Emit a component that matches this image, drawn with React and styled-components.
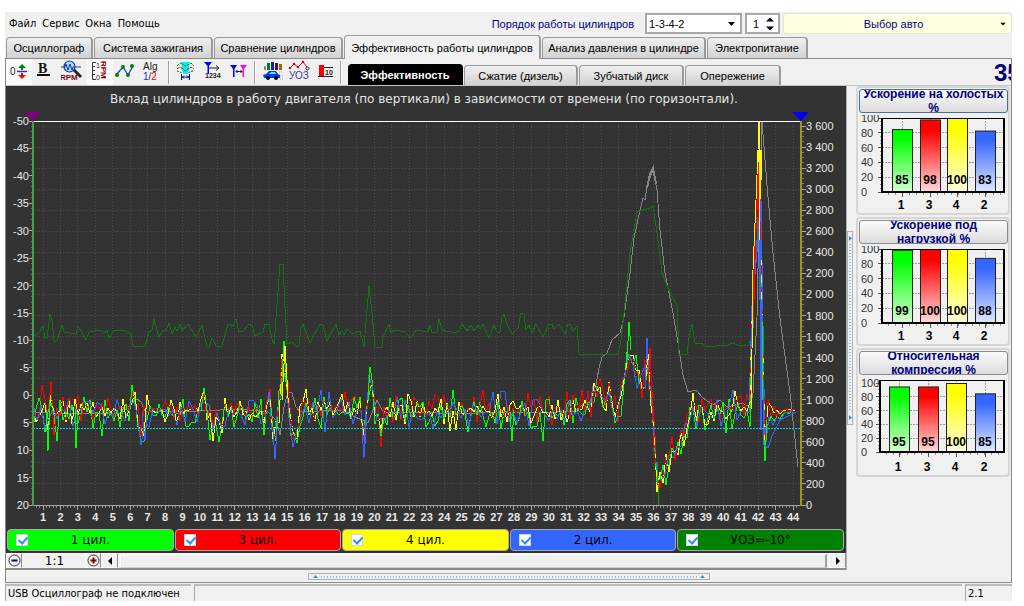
import React from "react";
import styled, { createGlobalStyle, css } from "styled-components";

const UI = `"DejaVu Sans Condensed", "DejaVu Sans", sans-serif`;
const WIDE = `"DejaVu Sans", sans-serif`;
const ARIAL = `"Liberation Sans", sans-serif`;
const COLORS = { green: "#00ff00", red: "#ff0000", yellow: "#ffff00", blue: "#3366ff", dark: "#008000" };

const GlobalStyle = createGlobalStyle`
  * { box-sizing: border-box; }
  body { margin: 0; background: #fff; font: 11px ${UI}; color: #000; }
  button, select, input { font: inherit; color: inherit; margin: 0; padding: 0; }
`;

const Page = styled.div`
  padding: 12px 12px 5px 5px;
`;
const Window = styled.div`
  background: #f0f0f0;
  overflow: hidden;
`;
const MenuBar = styled.header`
  display: flex;
  align-items: center;
  height: 23px;
  gap: 3px;
`;
const Menu = styled.nav`
  display: flex;
  gap: 6px;
  padding-left: 4px;
  flex: 1;
`;
const MenuItem = styled.button`
  border: 0;
  background: none;
  font: 11px ${UI};
`;
const OrderLabel = styled.label`
  font: 11px ${ARIAL};
  color: #000080;
  margin-right: 8px;
`;
const Field = styled.div`
  position: relative;
  height: 21px;
  width: ${(p) => p.$width}px;
  border: ${(p) => (p.$accent ? "1px solid #e4e4d0" : "2px solid #a8a8a8")};
  border-radius: ${(p) => (p.$accent ? 3 : 0)}px;
  background: ${(p) => (p.$accent ? "#ffffe1" : "#fff")};
  font: 11px ${ARIAL};
  color: ${(p) => (p.$accent ? "#000080" : "#000")};
  svg {
    position: absolute;
    right: ${(p) => p.$arrow}px;
    top: 50%;
    transform: translateY(-50%);
    pointer-events: none;
  }
`;
const controlStyle = css`
  appearance: none;
  width: 100%;
  height: 100%;
  border: 0;
  background: transparent;
  outline: 0;
  display: block;
`;
const Select = styled.select`
  ${controlStyle}
  padding-left: ${(p) => (p.$center ? 0 : 2)}px;
  text-align: ${(p) => (p.$center ? "center" : "left")};
  text-align-last: ${(p) => (p.$center ? "center" : "left")};
  padding-right: ${(p) => (p.$center ? 8 : 0)}px;
`;
const Spin = styled.input`
  ${controlStyle}
  appearance: textfield;
  padding-left: 6px;
  &::-webkit-inner-spin-button { appearance: none; }
`;

const Tabs = styled.div`
  display: flex;
  align-items: flex-end;
  gap: ${(p) => p.$gap}px;
  height: 23px;
  padding-left: ${(p) => p.$pad}px;
`;
const Tab = styled.button`
  font: 11px/16px ${ARIAL};
  height: 21px;
  width: ${(p) => p.$width}px;
  white-space: nowrap;
  border: 1px solid #9a9a9a;
  border-bottom: 0;
  border-right-width: 2px;
  border-radius: 4px 4px 0 0;
  background: linear-gradient(#efefef, #d2d2d2);
  ${(p) => p.$active && css`
    height: 24px;
    margin-bottom: -1px;
    z-index: 1;
    background: #f0f0f0;
  `}
`;
const SubTab = styled(Tab)`
  height: 20px;
  ${(p) => p.$selected && css`
    height: 21px;
    font-weight: bold;
    background: #000;
    border-color: #000;
    color: #fff;
  `}
`;
const Panel = styled.main`
  border: 1px solid #8a8a8a;
  padding-bottom: 2px;
`;
const ToolRow = styled.div`
  display: flex;
  align-items: flex-end;
  height: 27px;
  border-bottom: 1px solid #c4c4c4;
`;
const Tools = styled.div`
  display: flex;
  gap: 1px;
  align-self: center;
`;
const Tool = styled.button`
  width: 26px;
  height: 26px;
  border: 0;
  padding: 1px;
  background: ${(p) => (p.$on ? "#fafafa" : "transparent")};
  svg { display: block; }
`;
const Sep = styled.div`
  width: 2px;
  height: 23px;
  align-self: center;
  margin: 0 3px 0 1px;
  border-left: 1px solid #a0a0a0;
  border-right: 1px solid #fff;
`;
const Readout = styled.output`
  margin-left: auto;
  width: 17px;
  overflow: hidden;
  font: bold 24px/25px ${ARIAL};
  color: #000080;
`;

const Body = styled.div`
  display: flex;
`;
const ChartColumn = styled.section`
  flex: 1;
  min-width: 0;
  border-right: 1px solid #b0b0b0;
`;
const ChartArea = styled.div`
  background: #333;
  padding-bottom: 2px;
`;
const ChartTitle = styled.h1`
  margin: 0;
  height: 22px;
  padding: 4px 4px 0 0;
  font: 12px/18px ${WIDE};
  color: #e4e4e4;
  text-align: center;
`;
const Plot = styled.svg`
  display: block;
  width: 100%;
  height: auto;
`;
const Legend = styled.div`
  display: flex;
  gap: 1px;
  padding: 0 2px 0 1px;
`;
const LegendItem = styled.label`
  flex: 1;
  display: flex;
  align-items: center;
  height: 22px;
  padding: 0 20px 0 8px;
  border: 1px solid #a9a9a9;
  border-radius: 4px;
  background: ${(p) => p.$color};
  font: 12px ${WIDE};
`;
const LegendText = styled.span`
  flex: 1;
  text-align: center;
`;
const Check = styled.input`
  appearance: none;
  flex: none;
  width: 12px;
  height: 12px;
  background: #fff;
  border: 1px solid #c8d8e8;
  position: relative;
  &:checked::after {
    content: "";
    position: absolute;
    left: 3px;
    top: 0;
    width: 4px;
    height: 7px;
    border: solid #2d8ff0;
    border-width: 0 2px 2px 0;
    transform: rotate(42deg);
  }
`;
const ZoomRow = styled.div`
  display: flex;
  height: 17px;
  border-bottom: 2px solid #8c8c8c;
`;
const ZoomButton = styled.button`
  width: ${(p) => p.$width}px;
  border: 1px solid #fff;
  border-right: 1px solid #909090;
  background: #f0f0f0;
  display: flex;
  align-items: center;
  justify-content: center;
`;
const ZoomValue = styled.output`
  width: 63px;
  padding-left: 2px;
  text-align: center;
  font: 12px/17px ${WIDE};
`;
const ScrollTrack = styled.div`
  flex: 1;
  margin: 1px 2px 0;
  border: 1px solid #fff;
  border-right: 2px solid #a0a0a0;
  border-bottom-color: #d0d0d0;
`;
const VSplit = styled.div`
  width: 6px;
  display: flex;
  align-items: center;
  justify-content: center;
`;
const SplitGrip = styled.div`
  display: flex;
  flex-direction: ${(p) => (p.$vertical ? "column" : "row")};
  align-items: center;
  justify-content: space-between;
  border: 1px solid #b0b0b0;
  padding: ${(p) => (p.$vertical ? "4px 0" : "0 4px")};
  gap: 3px;
  width: ${(p) => (p.$vertical ? "6px" : "40%")};
  height: ${(p) => (p.$vertical ? "40%" : "7px")};
`;
const GripDots = styled.div`
  flex: 1;
  align-self: center;
  ${(p) => (p.$vertical
    ? css`width: 2px; background: repeating-linear-gradient(#8cc0f0 0 1px, transparent 1px 3px);`
    : css`height: 2px; background: repeating-linear-gradient(90deg, #8cc0f0 0 1px, transparent 1px 3px);`)}
`;
const HSplit = styled.div`
  display: flex;
  justify-content: center;
  padding-top: 3px;
`;
const Side = styled.aside`
  width: 158px;
  padding: 0 1px 0 3px;
  display: flex;
  flex-direction: column;
  gap: 2px;
`;
const Group = styled.section`
  border: 2px solid #d6d6d6;
  border-radius: 4px;
  padding-top: 1px;
  height: 129px;
`;
const GroupButton = styled.button`
  display: block;
  width: 149px;
  height: 24px;
  margin: 0 0 2px 1px;
  overflow: hidden;
  border: 1px solid ${(p) => (p.$focus ? "#4a7096" : "#8c8c8c")};
  border-radius: 3px;
  background: linear-gradient(#fafafa, #dcdcdc);
`;
const GroupText = styled.span`
  display: block;
  height: 28px;
  margin: -3px 0;
  padding: 0 2px;
  font: bold 12px/14px ${ARIAL};
  color: #000080;
`;
const BarSvg = styled.svg`
  display: block;
`;
const StatusBar = styled.footer`
  display: flex;
  gap: 3px;
  padding-top: 1px;
`;
const StatusCell = styled.div`
  height: 17px;
  border-top: 2px solid #bcbcbc;
  border-left: 1px solid #a8a8a8;
  padding-left: 2px;
  font: 11px/16px ${UI};
  width: ${(p) => (p.$width ? p.$width + "px" : "auto")};
  flex: ${(p) => (p.$width ? "none" : 1)};
`;

/* ---------- chart data, in plot units ---------- */
const LEFT = 33, RIGHT = 801, TOP = 121, BOTTOM = 505;

const ADVANCE =
  "33,336 38,334 43,326 45,338 47,338 50,314 52,320 54,341 57,341 62,325 64,332 76,334 78,326 86,340 89,332 99,330 105,333 107,330 109,338 114,330 123,330 131,334 133,346 145,346 149,332 152,330 154,319 159,337 163,330 166,331 169,323 172,334 175,327 177,331 180,324 182,331 188,324 196,337 199,331 202,325 207,347 209,347 212,338 216,346 222,346 228,324 233,326 236,319 239,332 243,331 249,324 252,326 255,336 263,332 265,324 269,324 272,339 274,344 277,305 280,264 283,264 285,307 287,344 292,342 297,347 299,345 301,328 303,324 310,343 320,324 323,325 327,341 336,324 339,335 342,331 344,335 347,329 352,334 360,331 364,347 367,310 369,286 372,313 375,347 382,347 383,337 389,324 391,333 395,330 405,332 411,338 416,330 428,332 430,325 432,332 437,332 439,319 442,330 455,333 459,331 462,324 467,331 471,325 474,331 478,325 480,329 483,324 489,338 494,325 497,332 500,332 502,317 504,314 507,324 512,334 518,328 521,313 524,314 526,330 529,325 532,333 536,324 543,337 549,324 552,324 554,329 559,324 565,334 568,324 570,324 573,331 577,326 579,354 618,354 621,340 624,313 630,253 637,212 650,208 653,206 657,233 662,273 670,293 677,305 678,330 679,354 687,354 689,337 692,324 695,343 703,344 706,347 728,345 732,343 740,346 748,345 751,338";

const RPM =
  "33,412 60,414 90,413 122,413 130,405 137,399 141,402 145,411 180,412 240,409 268,412 276,420 280,435 284,407 288,392 292,393 296,407 300,412 340,410 362,420 368,423 377,400 382,410 386,413 420,412 460,414 500,412 540,413 575,411 585,403 590,405 596,385 599,368 602,357 607,353 612,340 620,333 624,317 630,273 634,238 640,210 643,198 645,200 647,187 650,178 653,170 657,190 660,230 665,273 673,313 677,337 683,375 688,392 696,390 703,398 713,405 720,400 727,407 742,403 750,407 753,393 757,317 759,220 762,122 768,197 773,253 780,318 785,356 790,393 794,430 798,467";

const ENVELOPE = [
  [33, 411], [40, 410], [43, 398], [47, 430], [50, 394], [55, 418], [60, 410], [129, 411], [133, 388], [137, 415], [142, 434], [147, 412],
  [199, 410], [203, 390], [207, 420], [220, 426], [226, 412], [266, 412], [270, 390], [272, 430], [274, 448], [278, 415], [281, 380], [284, 352], [287, 385],
  [290, 425], [295, 441], [300, 410], [357, 409], [360, 394], [362, 425], [364, 448], [367, 400], [370, 376], [373, 388], [377, 420], [380, 432],
  [385, 412], [580, 410], [590, 408], [596, 378], [601, 394], [606, 408], [609, 390], [614, 414], [618, 414], [623, 384], [629, 352], [634, 362],
  [640, 380], [643, 392], [647, 360], [650, 376], [653, 418], [656, 472], [659, 484], [664, 472], [670, 453], [676, 450], [683, 442], [688, 426],
  [692, 404], [697, 413], [745, 410], [750, 408], [752, 340], [753, 270], [756, 210], [759, 150], [761, 200], [763, 420], [765, 440], [768, 412],
  [772, 418], [780, 414], [792, 410], [796, 411],
];

const SERIES = [
  { color: COLORS.yellow, seed: 75, step: 3, amp: 13, shift: 0, tail: -4, peak: 122 },
  { color: COLORS.red, seed: 41, step: 3, amp: 15, shift: -3, tail: -2, peak: 165 },
  { color: COLORS.green, seed: 97, step: 3, amp: 17, shift: 3, tail: 2, peak: 200 },
  { color: COLORS.blue, seed: 13, step: 4, amp: 14, shift: 2, tail: 6, peak: 172 },
  { color: COLORS.yellow, seed: 75, step: 3, amp: 13, shift: 0, tail: -4, peak: 122, dash: "7 9" },
  { color: COLORS.red, seed: 41, step: 3, amp: 15, shift: -3, tail: -2, peak: 165, dash: "5 17" },
];

function envelope(x) {
  for (let i = 1; i < ENVELOPE.length; i++) {
    const [x1, y1] = ENVELOPE[i];
    const [x0, y0] = ENVELOPE[i - 1];
    if (x <= x1) return y0 + ((y1 - y0) * (x - x0)) / (x1 - x0);
  }
  return 412;
}

function randomSource(seed) {
  let a = seed * 2654435761;
  return () => {
    a = (a + 0x6d2b79f5) | 0;
    let t = Math.imul(a ^ (a >>> 15), 1 | a);
    t = (t + Math.imul(t ^ (t >>> 7), 61 | t)) ^ t;
    return ((t ^ (t >>> 14)) >>> 0) / 4294967296;
  };
}

function trace({ seed, step, amp, shift, tail, peak }) {
  const rand = randomSource(seed);
  const points = [];
  let side = 1;
  for (let x = LEFT; x <= 796; x += step) {
    const calm = x > 766 ? Math.max(0, (796 - x) / 45) : 1;
    side = rand() > 0.25 ? -side : side;
    const size = Math.pow(rand(), 1.4) * amp * (rand() > 0.86 ? 1.7 : 1);
    let y = envelope(x) + shift * calm + side * size * calm;
    if (x > 766) y += tail * 2 * calm;
    if (x > 750 && x < 763) y = Math.max(envelope(x), peak);
    points.push(`${x},${Math.round(y)}`);
  }
  return points.join(" ");
}

const range = (n) => Array.from({ length: n }, (_, i) => i);
const leftY = (v) => TOP + ((v + 50) * 384) / 70;
const rightY = (v) => BOTTOM - (v * 379) / 3600;
const tickX = (n) => 43 + ((n - 1) * 750) / 43;

function MainChart() {
  return (
    <Plot viewBox="6 108 840 421" role="img" aria-label="Вклад цилиндров">
      <g stroke="#4d4d4d" strokeDasharray="1 2" shapeRendering="crispEdges">
        {range(44).map((i) => <line key={i} x1={tickX(i + 1)} x2={tickX(i + 1)} y1={TOP} y2={BOTTOM} />)}
        {range(18).map((i) => <line key={i} x1={LEFT} x2={RIGHT} y1={rightY((i + 1) * 200)} y2={rightY((i + 1) * 200)} />)}
      </g>
      <g stroke="#a8a8a8" shapeRendering="crispEdges">
        {range(15).map((i) => <line key={i} x1="29" x2="33" y1={leftY(i * 5 - 50)} y2={leftY(i * 5 - 50)} />)}
        {range(70).map((i) => <line key={i} x1="31" x2="33" y1={leftY(i - 50)} y2={leftY(i - 50)} opacity=".5" />)}
        {range(19).map((i) => <line key={i} x1="801" x2="806" y1={rightY(i * 200)} y2={rightY(i * 200)} />)}
        {range(73).map((i) => <line key={i} x1="801" x2="804" y1={rightY(i * 50)} y2={rightY(i * 50)} opacity=".6" />)}
        {range(44).map((i) => <line key={i} x1={tickX(i + 1)} x2={tickX(i + 1)} y1="505" y2="510" />)}
        {range(219).map((i) => <line key={i} x1={tickX(0.6 + i * 0.2)} x2={tickX(0.6 + i * 0.2)} y1="505" y2="508" opacity=".7" />)}
        <line x1={LEFT} x2={RIGHT} y1="505.5" y2="505.5" />
      </g>
      <g fontFamily="Liberation Sans, sans-serif" fontSize="11" fill="#e8e8e8">
        {range(15).map((i) => <text key={i} x="29" y={leftY(i * 5 - 50) + 4} textAnchor="end">{i * 5 - 50}</text>)}
        {range(19).map((i) => (
          <text key={i} x="806" y={rightY(i * 200) + 4}>
            {i >= 5 ? `${Math.floor(i / 5)} ${String((i * 200) % 1000).padStart(3, "0")}` : i * 200}
          </text>
        ))}
      </g>
      <g fontFamily="Liberation Sans, sans-serif" fontSize="11" fontWeight="bold" fill="#e8e8e8" textAnchor="middle">
        {range(44).map((i) => <text key={i} x={tickX(i + 1)} y="521">{i + 1}</text>)}
      </g>
      <g fill="none" shapeRendering="crispEdges">
        <polyline points={RPM} stroke="#868686" />
        <polyline points="647,188 650,174 653,168 656,184" stroke="#868686" strokeWidth="2" />
        {SERIES.map((s, i) => <polyline key={i} points={trace(s)} stroke={s.color} strokeDasharray={s.dash} />)}
        <polyline points="33,411 33,411" stroke={COLORS.green} />
        <polyline points="281,396 284,341 287,384" stroke={COLORS.green} />
        <polyline points="282,400 285,346 288,396" stroke={COLORS.yellow} />
        <polyline points="142,412 145,440 147,412" stroke={COLORS.blue} />
        <polyline points="273,430 275,459 277,430" stroke={COLORS.blue} />
        <polyline points="362,430 364,458 366,410" stroke={COLORS.blue} />
        <polyline points="46,410 48,451 50,400" stroke={COLORS.green} />
        <polyline points="75,408 76,448 78,412" stroke={COLORS.green} />
        <polyline points="368,400 370,367 373,386" stroke={COLORS.green} />
        <polyline points="510,412 512,441 514,410" stroke={COLORS.green} />
        <polyline points="627,360 629,322 631,350" stroke={COLORS.green} />
        <polyline points="645,390 647,338 649,380" stroke={COLORS.blue} />
        <polyline points="648,392 650,348 652,392 656,450" stroke={COLORS.red} />
        <polyline points="752,345 754,280 758,235 760,162 761,430" stroke={COLORS.blue} strokeWidth="2" />
        <polyline points="753,320 755,240 757,200 758,162 760,240" stroke={COLORS.red} strokeWidth="2" />
        <polyline points="751,410 752,350 753,270 756,200 758,150 759,122 760,240" stroke={COLORS.yellow} />
        <polyline points="760,200 761,150 762,180" stroke={COLORS.yellow} />
        <polyline points="762,320 763,400 764,440 765,461 767,420" stroke={COLORS.green} />
        <polyline points="763,380 764,445 768,448 772,436 780,420 796,412" stroke={COLORS.blue} />
        <polyline points="657,462 659,505" stroke="#00b000" />
        <polyline points={ADVANCE} stroke="#137413" />
        <line x1={LEFT} x2={RIGHT} y1="428.5" y2="428.5" stroke="#00d8e0" strokeDasharray="2 1" />
        <line x1={LEFT} x2={RIGHT} y1="121.5" y2="121.5" stroke="#fff" />
      </g>
      <rect x="32" y="121" width="2" height="385" fill="#4aa04a" />
      <rect x="800" y="121" width="2" height="385" fill="#98981c" />
      <path d="M24 112h17l-8 9z" fill="#800080" />
      <path d="M792 112h17l-8 9z" fill="#00f" />
    </Plot>
  );
}

function BarChart({ id, values, left, slots, hundred, bottom }) {
  const top = 3;
  const fills = [COLORS.green, COLORS.red, COLORS.yellow, COLORS.blue];
  const pale = ["#d4ffd4", "#ffd8d8", "#ffffdc", "#e0e8ff"];
  const names = ["1", "3", "4", "2"];
  const y = (v) => bottom - ((bottom - hundred) * v) / 100;
  return (
    <BarSvg width="150" height="98" viewBox="0 0 150 98" role="img">
      <defs>
        {fills.map((c, i) => (
          <linearGradient key={c} id={`${id}${i}`} x1="0" y1="0" x2="0" y2="1">
            <stop offset="0.15" stopColor={c} />
            <stop offset="1" stopColor={pale[i]} />
          </linearGradient>
        ))}
      </defs>
      <g stroke="#a0a0a0" strokeDasharray="2 1" shapeRendering="crispEdges">
        {[20, 40, 60, 80].map((v) => <line key={v} x1={left} x2="146" y1={y(v)} y2={y(v)} />)}
        {slots.map((s) => <line key={s} x1={s + 10} x2={s + 10} y1={top} y2={bottom} />)}
      </g>
      <g stroke="#555" shapeRendering="crispEdges">
        {range(6).map((i) => <line key={i} x1={left - 4} x2={left} y1={y(i * 20)} y2={y(i * 20)} />)}
        {range(21).map((i) => <line key={i} x1={left - 2} x2={left} y1={y(i * 5)} y2={y(i * 5)} opacity=".6" />)}
        {range(17).map((i) => <line key={i} x1={left + 6 + i * 7} x2={left + 6 + i * 7} y1={bottom} y2={bottom + 3} opacity=".6" />)}
        {slots.map((s) => <line key={s} x1={s + 10} x2={s + 10} y1={bottom} y2={bottom + 5} />)}
      </g>
      {values.map((v, i) => (
        <rect key={i} x={slots[i] + 0.5} y={y(v) + 0.5} width="20" height={bottom - y(v) - 1} fill={`url(#${id}${i})`} stroke="#222" />
      ))}
      <path d={`M${left} ${top + 0.5}H146V${bottom}H${left}z`} fill="none" stroke="#000" strokeWidth="1.5" shapeRendering="crispEdges" />
      <path d={`M${left} ${bottom}H147`} stroke="#000" strokeWidth="2" shapeRendering="crispEdges" />
      <g fontFamily="Liberation Sans, sans-serif" fontSize="11" fill="#333">
        {range(6).map((i) => <text key={i} x="3" y={y(i * 20) + 4}>{i * 20}</text>)}
      </g>
      <g fontFamily="Liberation Sans, sans-serif" fontSize="12" fontWeight="bold" textAnchor="middle">
        {values.map((v, i) => <text key={i} x={slots[i] + 10} y="69">{v}</text>)}
        {names.map((n, i) => <text key={n} x={slots[i] + 9} y="94">{n}</text>)}
      </g>
    </BarSvg>
  );
}

/* ---------- toolbar drawings ---------- */
const Glyph = ({ children }) => (
  <svg width="24" height="24" viewBox="0 0 24 24" fill="none" fontFamily="Liberation Sans, sans-serif">{children}</svg>
);
const glyphs = {
  zero: (
    <Glyph>
      <text x="3" y="15" fontSize="10" fill="#222">0</text>
      <path d="M10 11.5h10" stroke="#2030c0" strokeWidth="1.5" />
      <path d="M15 10V7" stroke="#008000" strokeWidth="2" /><path d="M11 8l4-4 4 4z" fill="#008000" />
      <path d="M15 13v3" stroke="#f00" strokeWidth="2" /><path d="M11 15l4 4 4-4z" fill="#f00" />
    </Glyph>
  ),
  bold: (
    <Glyph>
      <text x="4" y="13" fontSize="14" fontWeight="bold" fontFamily="Liberation Serif, serif" fill="#111">B</text>
      <path d="M3 15h13" stroke="#111" strokeWidth="2" />
    </Glyph>
  ),
  loupe: (
    <Glyph>
      <path d="M12 9l8 8" stroke="#222" strokeWidth="3" />
      <circle cx="8.5" cy="6.500" r="5.500" fill="#a8d8f8" stroke="#203878" strokeWidth="1.200" />
      <path d="M0 7h4l1-3 2 6 2-6 2 6 1-3h8" stroke="#1838b0" />
      <text x="-1" y="20" fontSize="8" fill="#800000" fontWeight="bold">RPM</text>
    </Glyph>
  ),
  scale: (
    <Glyph>
      <path d="M8 2.500H4.500v17H8M4 6.500h3M4 10.500h3M4 14.500h3" stroke="#333" />
      <text x="8" y="8" fontSize="7" fill="#222">1</text>
      <text x="8" y="20" fontSize="7" fill="#222">0</text>
      <text transform="translate(13 1) rotate(90)" fontSize="8" fontWeight="bold" fill="#800000">RPM</text>
    </Glyph>
  ),
  line: (
    <Glyph>
      <path d="M1 15l7-8 5 8 5-9" stroke="#2030e0" strokeWidth="1.300" />
      {[[2, 15], [8, 7], [13, 15], [17, 6]].map(([x, y]) => <circle key={x} cx={x} cy={y} r="2" fill="#008000" />)}
    </Glyph>
  ),
  alg: (
    <Glyph>
      <text x="1" y="10" fontSize="10" fill="#222">Alg</text>
      <text x="1" y="20" fontSize="10" fill="#22f">1<tspan fill="#333">/</tspan><tspan fill="#f00">2</tspan></text>
    </Glyph>
  ),
  filter: (
    <Glyph>
      <path d="M7 2h9l-1 4 1 3-2 3v2H9v-2L7 9l1-3z" fill="#00f0f8" />
      <path d="M3 6l3-3 2 1 3 2 3-1 3-2 3 3" stroke="#008000" strokeDasharray="3 1" />
      <path d="M3 9l3-2 2 1 3 3 3-2 3-2 3 2" stroke="#f00" strokeDasharray="3 1" />
      <path d="M3 11l3 1 2 1M19 11l-3 1-2 1" stroke="#008000" strokeDasharray="2 1" />
      <path d="M7.500 14v6M15.500 14v6M8 17h7M10 15.500L8.500 17l1.500 1.500M13 15.500l1.500 1.500-1.500 1.500" stroke="#00a" />
    </Glyph>
  ),
  count: (
    <Glyph>
      <path d="M3 2h8L8 6v8H6.500V6z" fill="#00f" />
      <path d="M8 8h9M15 5.500L18 8l-3 2.500" stroke="#222" />
      <text x="4" y="18" fontSize="7" fontWeight="bold" fill="#222">1234</text>
    </Glyph>
  ),
  span: (
    <Glyph>
      <path d="M2 5h7L6.500 9v8H5V9z" fill="#00f" />
      <path d="M12 5h7l-3 4v8h-1.500V9z" fill="#f0f" />
      <path d="M8 11.500h6M9.500 10L8 11.500 9.500 13M12.500 10l1.500 1.500-1.500 1.500" stroke="#222" />
    </Glyph>
  ),
  car: (
    <Glyph>
      <path d="M4 6h2v4H4z" fill="#888" /><path d="M7 3h3v7H7z" fill="#008000" /><path d="M11 2h3v8h-3z" fill="#1020c0" />
      <path d="M15 3h3v7h-3z" fill="#780040" /><path d="M19 4h3v6h-3z" fill="#807800" />
      <path d="M3 15l3-1 3-3h7l2 3 2 1v3H4z" fill="#0040e0" /><path d="M9 14l2-2h4l1 2z" fill="#58e8ff" />
      <circle cx="8" cy="18" r="2" fill="#003" /><circle cx="16" cy="18" r="2" fill="#003" />
      <path d="M19 12h4M20 16h3M20 19h3" stroke="#aaa" strokeDasharray="1 1" />
    </Glyph>
  ),
  angle: (
    <Glyph>
      <text x="2" y="19" fontSize="10" fill="#3838a0">УОЗ</text>
      <path d="M3 8l4-4 4 3 5-5 4 5" stroke="#f00" />
      {[[3, 8], [7, 4], [11, 7], [16, 2]].map(([x, y]) => <circle key={x} cx={x} cy={y} r="1.300" fill="#d00020" />)}
      <circle cx="20.500" cy="8.500" r="1.500" stroke="#222" />
    </Glyph>
  ),
  ten: (
    <Glyph>
      <path d="M5 5h5v11H5z" fill="#f00" /><path d="M10 7.500h9M4 16.500h15" stroke="#222" />
      <text x="11" y="15" fontSize="7" fontWeight="bold" fill="#222">10</text>
    </Glyph>
  ),
};

const TOOL_GROUPS = [
  [["zero", "Ноль", true], ["bold", "Толщина линий"], ["loupe", "Лупа"], ["scale", "Шкала", true], ["line", "Линии"], ["alg", "Алгоритм"]],
  [["filter", "Фильтр"], ["count", "Счёт"], ["span", "Интервал"]],
  [["car", "Авто"], ["angle", "УОЗ"], ["ten", "Десять"]],
];
const TABS = [["Осциллограф", 87], ["Система зажигания", 119], ["Сравнение цилиндров", 129], ["Эффективность работы цилиндров", 197], ["Анализ давления в цилиндре", 164], ["Электропитание", 101]];
const SUBTABS = [["Эффективность", 115], ["Сжатие (дизель)", 114], ["Зубчатый диск", 105], ["Опережение", 96]];
const LEGEND = [["1 цил.", COLORS.green], ["3 цил.", COLORS.red], ["4 цил.", COLORS.yellow], ["2 цил.", COLORS.blue], ["УОЗ=-10°", COLORS.dark]];
const GROUPS = [
  { id: "idle", title: "Ускорение на холостых %", values: [85, 98, 100, 83], left: 24, slots: [34, 62, 89, 117], hundred: 3, bottom: 77, focus: true },
  { id: "load", title: "Ускорение под нагрузкой %", values: [99, 100, 100, 88], left: 24, slots: [34, 62, 89, 117], hundred: 3, bottom: 77 },
  { id: "comp", title: "Относительная компрессия %", values: [95, 95, 100, 85], left: 22, slots: [31, 60, 88, 117], hundred: 6, bottom: 75 },
];

const Triangle = ({ d, w = 7, h = 4, fill = "#000" }) => (
  <svg width={w} height={h} viewBox={`0 0 ${w} ${h}`}><path d={d} fill={fill} /></svg>
);

export default function App() {
  return (
    <Page>
      <GlobalStyle />
      <Window>
        <MenuBar>
          <Menu>{["Файл", "Сервис", "Окна", "Помощь"].map((m) => <MenuItem key={m}>{m}</MenuItem>)}</Menu>
          <OrderLabel htmlFor="order">Порядок работы цилиндров</OrderLabel>
          <Field $width={97} $arrow={5}>
            <Select id="order" defaultValue="1-3-4-2"><option>1-3-4-2</option></Select>
            <Triangle d="M0 0h7L3.500 4z" />
          </Field>
          <Field $width={35} $arrow={4}>
            <Spin type="number" defaultValue="1" aria-label="Номер цилиндра" />
            <Triangle w={8} h={13} d="M0 4l4-4 4 4zM0 9h8l-4 4z" />
          </Field>
          <Field $width={229} $arrow={5} $accent>
            <Select $center aria-label="Выбор авто"><option>Выбор авто</option></Select>
            <Triangle w={6} h={3} d="M0 0h6L3 3z" />
          </Field>
        </MenuBar>
        <Tabs $gap={1} $pad={1} role="tablist">
          {TABS.map(([t, w], i) => <Tab key={t} role="tab" $width={w} $active={i === 3}>{t}</Tab>)}
        </Tabs>
        <Panel>
          <ToolRow>
            {TOOL_GROUPS.map((group, g) => (
              <React.Fragment key={g}>
                <Tools>
                  {group.map(([id, label, on]) => <Tool key={id} $on={on} aria-label={label}>{glyphs[id]}</Tool>)}
                </Tools>
                <Sep />
              </React.Fragment>
            ))}
            <Tabs $gap={1} $pad={3} role="tablist">
              {SUBTABS.map(([t, w], i) => <SubTab key={t} role="tab" $width={w} $selected={i === 0}>{t}</SubTab>)}
            </Tabs>
            <Readout>35</Readout>
          </ToolRow>
          <Body>
            <ChartColumn>
              <ChartArea>
                <ChartTitle>Вклад цилиндров в работу двигателя (по вертикали) в зависимости от времени (по горизонтали).</ChartTitle>
                <MainChart />
                <Legend>
                  {LEGEND.map(([t, c]) => (
                    <LegendItem key={t} $color={c}>
                      <Check type="checkbox" defaultChecked />
                      <LegendText>{t}</LegendText>
                    </LegendItem>
                  ))}
                </Legend>
              </ChartArea>
              <ZoomRow>
                <ZoomButton $width={16} aria-label="Уменьшить">
                  <svg width="13" height="13" viewBox="0 0 13 13" fill="none"><circle cx="6.500" cy="6.500" r="5.500" stroke="#333" /><path d="M3.500 6.500h6" stroke="#000080" strokeWidth="2" /></svg>
                </ZoomButton>
                <ZoomValue>1:1</ZoomValue>
                <ZoomButton $width={16} aria-label="Увеличить">
                  <svg width="13" height="13" viewBox="0 0 13 13" fill="none"><circle cx="6.500" cy="6.500" r="5.500" stroke="#333" /><path d="M3.500 6.500h6M6.500 3.500v6" stroke="#800000" strokeWidth="2" /></svg>
                </ZoomButton>
                <ZoomButton $width={17} aria-label="Назад"><Triangle w={4} h={8} d="M4 0v8L0 4z" /></ZoomButton>
                <ScrollTrack />
                <ZoomButton $width={17} aria-label="Вперёд"><Triangle w={4} h={8} d="M0 0v8l4-4z" /></ZoomButton>
              </ZoomRow>
            </ChartColumn>
            <VSplit>
              <SplitGrip $vertical>
                <Triangle w={3} h={5} d="M0 0v5l3-2.500z" fill="#2d8ff0" />
                <GripDots $vertical />
                <Triangle w={3} h={5} d="M0 0v5l3-2.500z" fill="#2d8ff0" />
              </SplitGrip>
            </VSplit>
            <Side>
              {GROUPS.map((g) => (
                <Group key={g.id}>
                  <GroupButton $focus={g.focus}><GroupText>{g.title}</GroupText></GroupButton>
                  <BarChart {...g} />
                </Group>
              ))}
            </Side>
          </Body>
          <HSplit>
            <SplitGrip>
              <Triangle w={5} h={3} d="M0 3h5L2.500 0z" fill="#2d8ff0" />
              <GripDots />
              <Triangle w={5} h={3} d="M0 3h5L2.500 0z" fill="#2d8ff0" />
            </SplitGrip>
          </HSplit>
        </Panel>
        <StatusBar>
          <StatusCell $width={186}>USB Осциллограф не подключен</StatusCell>
          <StatusCell />
          <StatusCell $width={47}>2.1</StatusCell>
        </StatusBar>
      </Window>
    </Page>
  );
}
